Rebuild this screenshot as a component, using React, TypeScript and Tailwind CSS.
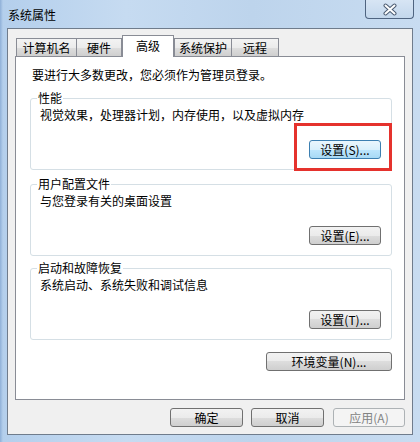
import React from "react";

const font = { fontFamily: '"Noto Sans CJK SC", "Liberation Sans", sans-serif' };

const normalBtn =
  "h-[19px] border border-[#707070] rounded-[3px] bg-[linear-gradient(#f2f2f2,#ebebeb_50%,#dddddd_50%,#cfcfcf)] text-[12px] leading-[14px] text-black flex items-center justify-center";
const blueBtn =
  "h-[19px] border border-[#3c7fb1] rounded-[3px] bg-[linear-gradient(#eaf6fd,#d9f0fc_50%,#bee6fd_50%,#a7d9f5)] text-[12px] leading-[14px] text-black flex items-center justify-center";

type Group = {
  title: string;
  desc: string;
  button: string;
  focused?: boolean;
  marked?: boolean;
};

const groups: Group[] = [
  { title: "性能", desc: "视觉效果，处理器计划，内存使用，以及虚拟内存", button: "设置(S)...", focused: true, marked: true },
  { title: "用户配置文件", desc: "与您登录有关的桌面设置", button: "设置(E)..." },
  { title: "启动和故障恢复", desc: "系统启动、系统失败和调试信息", button: "设置(T)..." },
];

function GroupBox({ g, mt }: { g: Group; mt: string }) {
  return (
    <div
      className={`relative ${mt} w-[362px] h-[72px] border border-[#d5dfe5] rounded-[3px] flex flex-col pl-[9px] pt-[9px]`}
    >
      <span className="absolute -top-[8px] left-[6px] px-[1px] bg-white text-[12px] leading-[14px]">
        {g.title}
      </span>
      <p className="text-[12px] leading-[14px]">{g.desc}</p>
      <button className={`${g.focused ? blueBtn : normalBtn} w-[72px] self-end mt-auto mr-[10px] mb-[10px]`}>
        {g.button}
      </button>
      {g.marked && (
        <div className="absolute left-[263px] top-[24px] w-[98px] h-[48px] border-[3px] border-[#e5322d] z-10" />
      )}
    </div>
  );
}

const tabs = [
  { label: "计算机名", w: "w-[61px]", ml: "" },
  { label: "硬件", w: "w-[46px]", ml: "-ml-px" },
  { label: "高级", w: "w-[52px]", ml: "", active: true },
  { label: "系统保护", w: "w-[58px]", ml: "" },
  { label: "远程", w: "w-[48px]", ml: "-ml-px" },
];

export default function App() {
  return (
    <div
      style={font}
      className="relative w-[420px] h-[442px] overflow-hidden flex flex-col bg-[linear-gradient(to_right,#8fb0d8_0px,#b4cfec_3px,#c6dbf1_30%,#bdd4ec_60%,#c8dcf1)]"
    >
      {/* title bar */}
      <div className="h-[28px] flex items-start">
        <span className="self-center pl-[8px] pt-[2px] text-[12px] leading-[14px] text-black">系统属性</span>
        <div className="ml-auto mr-[6px] w-[49px] h-[19px] border border-t-0 border-[#4f6480] rounded-b-[4px] bg-[linear-gradient(#d7e5f4,#c3d7ec)] flex items-center justify-center">
          <svg width="16" height="13" viewBox="0 0 16 13">
            <path d="M3.5 2.5 L12.5 10.5 M12.5 2.5 L3.5 10.5" stroke="#4a5a70" strokeWidth="4" strokeLinecap="round" />
            <path d="M3.5 2.5 L12.5 10.5 M12.5 2.5 L3.5 10.5" stroke="#ffffff" strokeWidth="2" strokeLinecap="round" />
          </svg>
        </div>
      </div>

      {/* client area */}
      <div className="ml-[7px] w-[406px] h-[407px] border border-[#6f7c8c] bg-[#f0f0f0] pt-[6px] pl-[7px] text-black">
        <div className="flex items-end h-[21px] pl-[1px]">
          {tabs.map((t) =>
            t.active ? (
              <div
                key={t.label}
                className={`${t.w} h-[22px] -mb-px relative z-10 bg-white border border-b-0 border-[#898c95] text-[12px] leading-[14px] flex items-center justify-center pb-[1px]`}
              >
                {t.label}
              </div>
            ) : (
              <div
                key={t.label}
                className={`${t.w} ${t.ml} h-[18px] border border-b-0 border-[#898c95] bg-[linear-gradient(#f3f3f3,#ebebeb_50%,#dedede_50%,#cfcfcf)] text-[12px] leading-[14px] flex items-center justify-center`}
              >
                {t.label}
              </div>
            )
          )}
        </div>

        <div className="w-[390px] h-[344px] border border-[#898c95] bg-white pt-[11px] px-[14px] flex flex-col">
          <p className="pl-[2px] text-[12px] leading-[14px]">要进行大多数更改，您必须作为管理员登录。</p>
          <GroupBox g={groups[0]} mt="mt-[16px]" />
          <GroupBox g={groups[1]} mt="mt-[14px]" />
          <GroupBox g={groups[2]} mt="mt-[12px]" />
          <div className="w-[362px] flex justify-end mt-[12px]">
            <button className={`${normalBtn} w-[126px]`}>环境变量(N)...</button>
          </div>
        </div>

        <div className="w-[390px] flex justify-end gap-[8px] mt-[8px]">
          <button className={`${normalBtn} w-[73px]`}>确定</button>
          <button className={`${normalBtn} w-[73px] mr-[1px]`}>取消</button>
          <button className="w-[72px] h-[19px] border border-[#adb2b5] rounded-[3px] bg-[#f4f4f4] text-[12px] leading-[14px] text-[#838383] flex items-center justify-center">
            应用(A)
          </button>
        </div>
      </div>
    </div>
  );
}
